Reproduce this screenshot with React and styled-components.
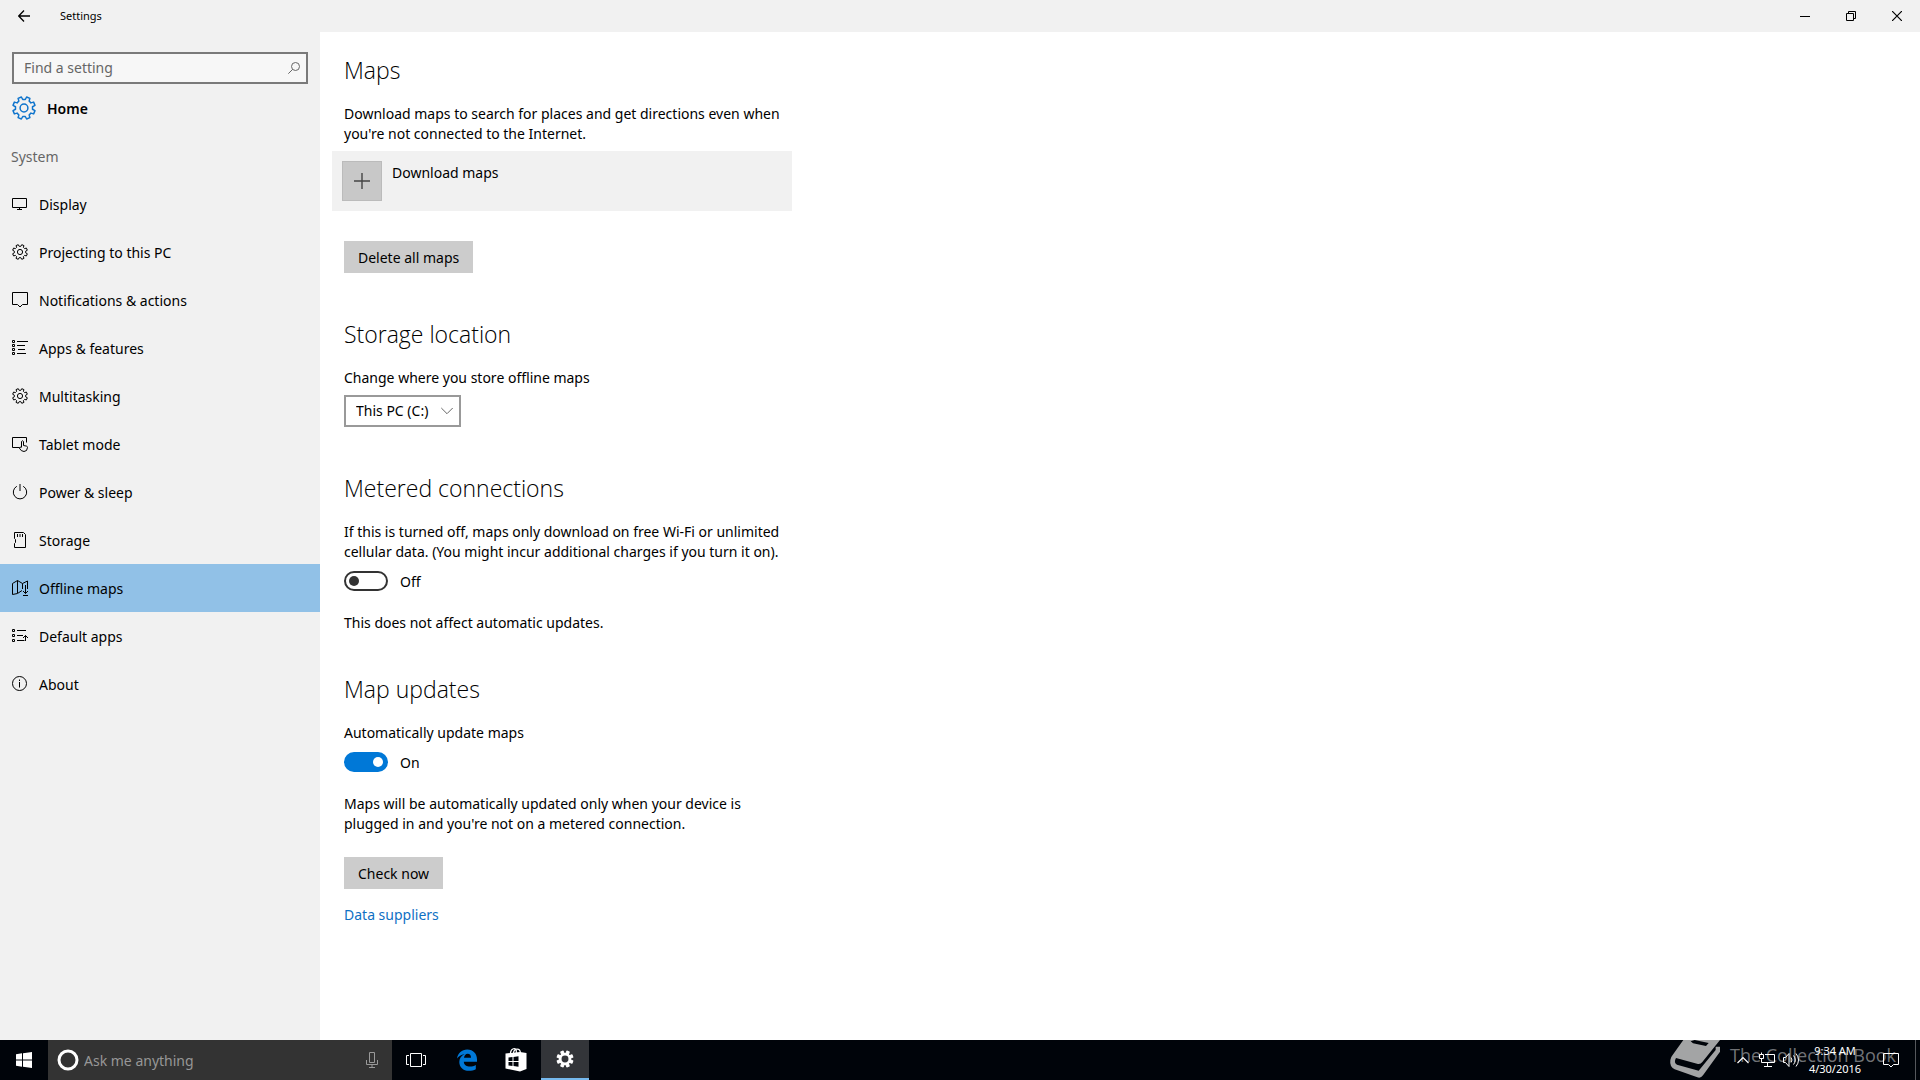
import React, { useState } from 'react'
import styled, { createGlobalStyle, css } from 'styled-components'

// outline of a cog with a notch at twelve o'clock, centred on 12,12
const gearPath = (outer, root) => {
  const points = []
  for (let i = 0; i < 8; i++) {
    const mid = i * 45 + 22.5
    const corners = [[-14, root], [-9, outer], [9, outer], [14, root]]
    corners.forEach(([shift, r]) => {
      const a = ((mid + shift) * Math.PI) / 180
      points.push(`${(12 + r * Math.sin(a)).toFixed(2)} ${(12 - r * Math.cos(a)).toFixed(2)}`)
    })
  }
  return `M${points.join('L')}Z`
}

const Svg = ({ size = 16, children, ...rest }) => (
  <svg
    width={size}
    height={size}
    viewBox={`0 0 ${size} ${size}`}
    fill='none'
    stroke='currentColor'
    aria-hidden='true'
    {...rest}
  >
    {children}
  </svg>
)

const GearIcon = ({ size = 16, weight = 1.5 }) => (
  <Svg size={size} viewBox='0 0 24 24' strokeWidth={weight} strokeLinejoin='round'>
    <path d={gearPath(11.3, 8.6)} />
    <circle cx='12' cy='12' r='3.9' />
  </Svg>
)

const DisplayIcon = () => (
  <Svg>
    <path d='M.5 2.5h14v9H.5zM7.5 11.5v2M5 13.5h5' />
  </Svg>
)

const NotificationIcon = () => (
  <Svg>
    <path d='M.5.5h15v12h-5L8 15l-2.500-2.500h-5z' />
  </Svg>
)

const AppsIcon = () => (
  <Svg>
    <path d='M.5.5h2v2h-2zM.5 4.500h2v2h-2zM.5 8.500h2v2h-2zM.5 12.500h2v2h-2zM5 1.500h11M5 5.500h8M6 9.500h7M5 13.500h9' />
  </Svg>
)

const TabletIcon = () => (
  <Svg>
    <path d='M7 11.500H.5v-10h14v5' />
    <path d='M9.500 11V5.500q1-1.500 2 0v4l3 .6q1 .3 1 1.400-.2 4-3.500 4-3 0-4.800-3.600.4-1.500 2.300-.4' />
  </Svg>
)

const PowerIcon = () => (
  <Svg>
    <path d='M8 0v7M4.800 2.300a6.700 6.700 0 1 0 6.400 0' />
  </Svg>
)

const StorageIcon = () => (
  <Svg>
    <path d='M2.500.5h9l2 2v13h-11v-4l1-1v-3l-1-1zM5.500 2v3M8 2v3M10.500 2v3' />
  </Svg>
)

const OfflineMapsIcon = () => (
  <Svg>
    <path d='M10 10.500l-4.500 3-5 1v-11l5-3 5 3 5-2.500V9M5.500.5v12.500M10.500 3.500V9M13.500 5v8.500M11 11l2.500 2.500L16 11M11 15.500h5' />
  </Svg>
)

const DefaultAppsIcon = () => (
  <Svg>
    <path d='M.5 1.500h2v2h-2zM.5 6.500h2v2h-2zM.5 11.500h2v2h-2zM5 2.500h9M5 7.500h6M5 12.500h7.500M13.500 13V7.500M11 10l2.500-2.500L16 10' />
  </Svg>
)

const AboutIcon = () => (
  <Svg>
    <circle cx='7.500' cy='7.500' r='7' />
    <path d='M7.500 6v5.500M7.500 3.500v1.500' />
  </Svg>
)

const menu = [
  { name: 'Display', icon: <DisplayIcon /> },
  { name: 'Projecting to this PC', icon: <GearIcon /> },
  { name: 'Notifications & actions', icon: <NotificationIcon /> },
  { name: 'Apps & features', icon: <AppsIcon /> },
  { name: 'Multitasking', icon: <GearIcon /> },
  { name: 'Tablet mode', icon: <TabletIcon /> },
  { name: 'Power & sleep', icon: <PowerIcon /> },
  { name: 'Storage', icon: <StorageIcon /> },
  { name: 'Offline maps', icon: <OfflineMapsIcon /> },
  { name: 'Default apps', icon: <DefaultAppsIcon /> },
  { name: 'About', icon: <AboutIcon /> },
]

const Switch = ({ label, checked, onChange }) => (
  <SwitchLabel>
    <SwitchInput
      type='checkbox'
      role='switch'
      aria-label={label}
      checked={checked}
      onChange={e => onChange(e.target.checked)}
    />
    <Caption>{checked ? 'On' : 'Off'}</Caption>
  </SwitchLabel>
)

const TitleBar = () => (
  <Header>
    <BackButton aria-label='Back'>
      <Svg size={12}>
        <path d='M12 6H1M6 .5L.7 6 6 11.500' strokeWidth='1.300' />
      </Svg>
    </BackButton>
    <WindowTitle>Settings</WindowTitle>
    <WindowButton aria-label='Minimize'>
      <Svg size={10}>
        <path d='M0 5.500h10' />
      </Svg>
    </WindowButton>
    <WindowButton aria-label='Restore'>
      <Svg size={10}>
        <path d='M.5 2.500h7v7h-7zM2.500 2.500v-2h7v7h-2' />
      </Svg>
    </WindowButton>
    <WindowButton aria-label='Close'>
      <Svg size={10}>
        <path d='M0 0l10 10M10 0L0 10' strokeWidth='1.200' />
      </Svg>
    </WindowButton>
  </Header>
)

const Sidebar = () => {
  const [active, setActive] = useState('Offline maps')

  return (
    <Side>
      <SearchBox>
        <SearchInput type='text' placeholder='Find a setting' aria-label='Find a setting' />
        <Svg size={12}>
          <circle cx='7.500' cy='4.500' r='4' />
          <path d='M4.700 7.300L.3 11.700' />
        </Svg>
      </SearchBox>
      <HomeLink href='#home'>
        <HomeIcon>
          <GearIcon size={24} />
        </HomeIcon>
        <Caption>Home</Caption>
      </HomeLink>
      <GroupName>
        <Caption>System</Caption>
      </GroupName>
      <nav>
        {menu.map(({ name, icon }) => (
          <MenuLink key={name} href='#' $active={name === active} onClick={() => setActive(name)}>
            {icon}
            <Caption>{name}</Caption>
          </MenuLink>
        ))}
      </nav>
    </Side>
  )
}

const Content = () => {
  const [metered, setMetered] = useState(false)
  const [autoUpdate, setAutoUpdate] = useState(true)

  return (
    <Main>
      <Section>
        <Title>Maps</Title>
        <Text>
          Download maps to search for places and get directions even when
          <br />
          you're not connected to the Internet.
        </Text>
        <DownloadRow>
          <PlusBox>
            <Svg>
              <path d='M0 8h16M8 0v16' strokeWidth='1.400' />
            </Svg>
          </PlusBox>
          <Caption>Download maps</Caption>
        </DownloadRow>
        <Button>
          <Caption>Delete all maps</Caption>
        </Button>
      </Section>
      <Section>
        <Title>Storage location</Title>
        <Text as='label' htmlFor='location'>
          Change where you store offline maps
        </Text>
        <SelectWrapper>
          <Select id='location'>
            <option>This PC (C:)</option>
          </Select>
          <Svg size={12}>
            <path d='M.3 3L6 8.700 11.700 3' />
          </Svg>
        </SelectWrapper>
      </Section>
      <Section $tight>
        <Title>Metered connections</Title>
        <Text>
          If this is turned off, maps only download on free Wi-Fi or unlimited
          <br />
          cellular data. (You might incur additional charges if you turn it on).
        </Text>
        <Switch label='Metered connections' checked={metered} onChange={setMetered} />
        <Text>This does not affect automatic updates.</Text>
      </Section>
      <Section>
        <Title>Map updates</Title>
        <Text>Automatically update maps</Text>
        <Switch label='Automatically update maps' checked={autoUpdate} onChange={setAutoUpdate} />
        <Text>
          Maps will be automatically updated only when your device is
          <br />
          plugged in and you're not on a metered connection.
        </Text>
        <Button $close>
          <Caption>Check now</Caption>
        </Button>
        <Link href='#suppliers'>Data suppliers</Link>
      </Section>
    </Main>
  )
}

const Taskbar = () => (
  <Bar>
    <TaskButton aria-label='Start'>
      <Svg size={16} stroke='none' fill='#fff'>
        <path d='M0 2.200L6 1.300V7.500H0zM7 1.200L16 0V7.500H7zM0 8.500H6V14.700L0 13.800zM7 8.500H16V16L7 14.800z' />
      </Svg>
    </TaskButton>
    <Cortana>
      <Svg size={22}>
        <circle cx='11' cy='11' r='9' stroke='#fff' strokeWidth='3' />
      </Svg>
      <CortanaInput type='text' placeholder='Ask me anything' aria-label='Ask me anything' />
      <Svg size={16}>
        <path d='M5.500.5h5v10h-5zM2.500 8v4.500h11V8M8 12.500v3M5 15.500h6' stroke='#999' />
      </Svg>
    </Cortana>
    <TaskButton aria-label='Task view'>
      <Svg size={20}>
        <path d='M4.500 3.500h11v13h-11zM3 5.500H.5v9H3M17 5.500h2.500v9H17' />
      </Svg>
    </TaskButton>
    <Pinned>
      <TaskButton aria-label='Microsoft Edge'>
        <Svg size={22} stroke='none' fill='#0078d7'>
          <path d='M1 9.500C2 4 5.800.5 11.200.5 17.400.5 21 5 21 10.300v2.500H7.800c.2 3.300 3 4.800 6.200 4.800 2.200 0 4-.6 5.800-1.700v4.300c-2 1.100-4.300 1.600-6.800 1.600-6 0-9.700-3.600-9.700-8.800 0-3.500 2-6.300 5.300-8C5 5.800 2.700 7.300 1 9.500zM8 8.800h7c0-2.500-1.200-4-3.300-4S8.300 6.500 8 8.800z' />
        </Svg>
      </TaskButton>
      <TaskButton aria-label='Store'>
        <Svg size={24}>
          <path d='M6.500 7V4.500C7.500 0 11.500-.3 12.300 2.500V6M9.500 5c.5-5 6.500-5.500 7 0' stroke='#fff' strokeWidth='1.200' />
          <path d='M1.500 5.500L16 4l6.500 1v16L16 23.500 1.500 20.500z' fill='#fff' stroke='none' />
          <path d='M4.500 9.500L8.500 9v4h-4zM9.500 8.900l5-.6V13h-5zM4.500 14h4v4l-4-.5zM9.500 14h5v4.800l-5-.7z' fill='#00040a' stroke='none' />
        </Svg>
      </TaskButton>
      <TaskButton aria-label='Settings' $open>
        <Svg size={18} viewBox='0 0 24 24' stroke='#fff' strokeLinejoin='round'>
          <path d={gearPath(10.8, 7.4)} fill='#fff' strokeWidth='1.500' />
          <circle cx='12' cy='12' r='4.600' fill='#333539' stroke='none' />
        </Svg>
      </TaskButton>
    </Pinned>
    <Tray>
      <TrayButton aria-label='Show hidden icons'>
        <Svg size={12}>
          <path d='M.5 9L6 3.500 11.500 9' strokeWidth='1.200' />
        </Svg>
      </TrayButton>
      <TrayButton aria-label='Network'>
        <Svg>
          <path d='M6 2.500h9.500v8H2.500V7M.5 2.500h4v4h-4zM8.500 10.500v4M5 14.500h8M2.500.5v2' />
        </Svg>
      </TrayButton>
      <TrayButton aria-label='Volume'>
        <Svg>
          <path d='M.5 5.500h2l3.500-4v13l-3.500-4h-2zM8 5.500q2 2.500 0 5M10.500 3.500q3.500 4.500 0 9M13 1.500q5 6.500 0 13' />
        </Svg>
      </TrayButton>
      <Clock>
        <span>9:34 AM</span>
        <span>4/30/2016</span>
      </Clock>
      <TrayButton aria-label='Action center'>
        <Svg>
          <path d='M.5 1.500h15v11h-5L8 15l-2.500-2.500h-5z' />
        </Svg>
      </TrayButton>
      <ShowDesktop aria-label='Show desktop' />
    </Tray>
    <Watermark>
      <svg width='70' height='40' viewBox='0 30 210 120' aria-hidden='true'>
        <path
          fill='#a3a4a5'
          fillRule='evenodd'
          d='M70 30H180L127 96Q121 104 111 101L48 84Q40 98 51 104L116 122L167 60V50H180V65L129 136Q122 146 112 142L44 118Q28 110 31 90Q33 80 40 72ZM92 34L99 40L138 48L146 39L104 30Z'
        />
      </svg>
      The Collection Book
    </Watermark>
  </Bar>
)

const App = () => (
  <Page>
    <GlobalStyle />
    <TitleBar />
    <Body>
      <Sidebar />
      <Content />
    </Body>
    <Taskbar />
  </Page>
)

export default App

const GlobalStyle = createGlobalStyle`
  * {
    box-sizing: border-box;
  }
  body {
    margin: 0;
    background: #fff;
    color: #000;
    font: 14px/20px 'Noto Sans', 'Open Sans', sans-serif;
  }
  button, input, select {
    margin: 0;
    padding: 0;
    border: 0;
    border-radius: 0;
    background: none;
    color: inherit;
    font: inherit;
  }
  svg {
    display: block;
    flex: none;
  }
`
const Page = styled.div`
  display: flex;
  flex-direction: column;
  min-height: 100vh;
`
const Header = styled.header`
  display: flex;
  align-items: center;
  height: 32px;
  background: #f1f1f1;
`
const BackButton = styled.button`
  display: flex;
  align-items: center;
  justify-content: center;
  width: 48px;
  height: 32px;
`
const WindowTitle = styled.h1`
  flex: 1;
  margin: 0;
  padding-left: 12px;
  font-size: 11px;
  font-weight: 400;
`
const WindowButton = styled.button`
  display: flex;
  align-items: center;
  justify-content: center;
  width: 46px;
  height: 32px;
`
const Body = styled.div`
  display: flex;
  flex: 1;
`
const Side = styled.aside`
  flex: none;
  width: 320px;
  padding-top: 20px;
  background: #f1f1f1;
`
const Caption = styled.span`
  display: block;
  padding-top: 2px;
`
const SearchBox = styled.div`
  display: flex;
  align-items: center;
  height: 32px;
  margin: 0 12px;
  padding: 0 6px 0 10px;
  border: 2px solid #7a7a7a;
  background: #f7f7f7;
  color: #666;
`
const SearchInput = styled.input`
  flex: 1;
  min-width: 0;
  outline: none;
  &::placeholder {
    color: #666;
    opacity: 1;
  }
`
const HomeLink = styled.a`
  display: flex;
  align-items: center;
  gap: 11px;
  height: 48px;
  padding: 0 12px;
  color: #000;
  font-weight: 600;
  text-decoration: none;
`
const HomeIcon = styled.span`
  color: #0f74cc;
`
const GroupName = styled.h2`
  display: flex;
  align-items: center;
  height: 48px;
  margin: 0;
  padding: 0 11px;
  color: #666;
  font-size: 14px;
  font-weight: 400;
`
const MenuLink = styled.a`
  display: flex;
  align-items: center;
  gap: 11px;
  height: 48px;
  padding: 0 12px;
  color: #000;
  text-decoration: none;
  ${p => p.$active && css`
    background: #91c1e7;
  `}
`
const Main = styled.main`
  flex: 1;
  padding: 22px 24px 0;
`
const Section = styled.section`
  display: flex;
  flex-direction: column;
  align-items: flex-start;
  padding-bottom: ${p => (p.$tight ? 40 : 45)}px;
`
const Title = styled.h2`
  margin: 0 0 18px;
  font-family: 'Open Sans', sans-serif;
  font-size: 23px;
  font-weight: 300;
  line-height: 32px;
`
const Text = styled.p`
  margin: 0;
`
const DownloadRow = styled.button`
  display: flex;
  align-items: flex-start;
  gap: 10px;
  width: 460px;
  height: 60px;
  margin: 7px 0 0 -12px;
  padding: 10px;
  background: #f1f1f1;
`
const PlusBox = styled.span`
  display: flex;
  align-items: center;
  justify-content: center;
  width: 40px;
  height: 40px;
  border: 1px solid #bbb;
  background: #c8c8c8;
  color: #444;
`
const Button = styled.button`
  height: 32px;
  margin-top: ${p => (p.$close ? 23 : 30)}px;
  padding: 0 14px;
  background: #ccc;
`
const SelectWrapper = styled.div`
  position: relative;
  margin-top: 7px;
  svg {
    position: absolute;
    top: 10px;
    right: 8px;
    color: #666;
    pointer-events: none;
  }
`
const Select = styled.select`
  appearance: none;
  height: 32px;
  padding: 0 30px 0 10px;
  border: 2px solid #999;
`
const SwitchLabel = styled.label`
  display: flex;
  align-items: center;
  gap: 12px;
  height: 24px;
  margin: 7px 0 20px;
`
const SwitchInput = styled.input`
  appearance: none;
  display: flex;
  align-items: center;
  width: 44px;
  height: 20px;
  padding: 0 3px;
  border: 2px solid #333;
  border-radius: 10px;
  &::before {
    content: '';
    width: 10px;
    height: 10px;
    border-radius: 50%;
    background: #333;
  }
  &:checked {
    justify-content: flex-end;
    border-color: #0078d7;
    background: #0078d7;
  }
  &:checked::before {
    background: #fff;
  }
`
const Link = styled.a`
  margin-top: 16px;
  color: #0f70c4;
  text-decoration: none;
`
const Bar = styled.footer`
  position: relative;
  display: flex;
  height: 40px;
  background: #00040a;
  color: #fff;
`
const TaskButton = styled.button`
  display: flex;
  align-items: center;
  justify-content: center;
  width: 48px;
  height: 40px;
  ${p => p.$open && css`
    border-bottom: 2px solid #76b9ed;
    background: #333539;
  `}
`
const Pinned = styled.div`
  display: flex;
  gap: 1px;
  padding-left: 3px;
`
const Cortana = styled.div`
  display: flex;
  align-items: center;
  gap: 5px;
  width: 344px;
  padding: 0 12px 0 9px;
  background: #333;
`
const CortanaInput = styled.input`
  flex: 1;
  min-width: 0;
  padding-top: 2px;
  outline: none;
  &::placeholder {
    color: #979797;
    opacity: 1;
  }
`
const Tray = styled.div`
  display: flex;
  align-items: center;
  margin-left: auto;
`
const TrayButton = styled.button`
  display: flex;
  align-items: center;
  justify-content: center;
  width: 24px;
  height: 40px;
`
const Clock = styled.time`
  display: flex;
  flex-direction: column;
  align-items: center;
  width: 76px;
  padding-right: 12px;
  font-size: 11px;
  line-height: 18px;
`
const ShowDesktop = styled.button`
  width: 5px;
  height: 40px;
  margin-left: 12px;
  border-left: 1px solid #55585c;
`
const Watermark = styled.div`
  position: absolute;
  top: 0;
  right: 24px;
  display: flex;
  color: rgba(255, 255, 255, 0.45);
  font-family: 'Open Sans', sans-serif;
  font-size: 18px;
  line-height: 30px;
  white-space: nowrap;
  pointer-events: none;
`
